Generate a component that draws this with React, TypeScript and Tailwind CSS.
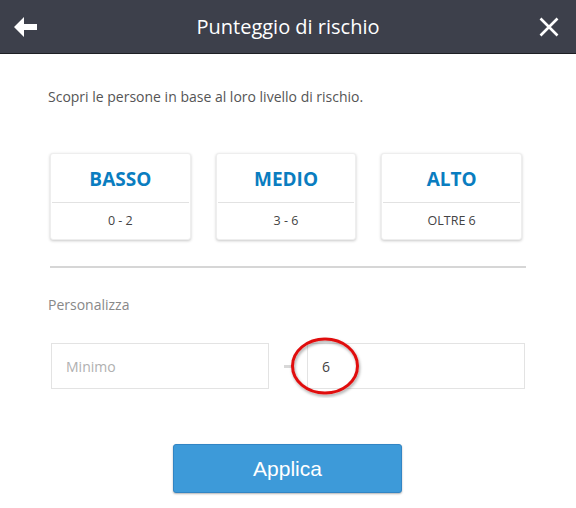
import React from "react";

const cards = [
  { title: "BASSO", range: "0 - 2" },
  { title: "MEDIO", range: "3 - 6" },
  { title: "ALTO", range: "OLTRE 6" },
];

export default function App() {
  return (
    <div className="w-[576px] h-[508px] bg-white overflow-hidden" style={{ fontFamily: '"Open Sans", sans-serif' }}>
      <div className="h-[54px] bg-[#3d404b] border-b border-[#1e1f24] flex items-center justify-between px-[14px]">
        <svg width="23" height="20" viewBox="0 0 23 20" className="mt-[1px]">
          <path d="M0 10 L10 0 L10 7 L23 7 L23 13 L10 13 L10 20 Z" fill="#fff" />
        </svg>
        <div className="text-white text-[20px] leading-none">Punteggio di rischio</div>
        <svg width="20" height="20" viewBox="0 0 20 20" className="mr-[3px]">
          <path d="M1.5 1.5 L18.5 18.5 M18.5 1.5 L1.5 18.5" stroke="#fff" strokeWidth="2.6" />
        </svg>
      </div>

      <div className="px-[48px]">
        <p className="mt-[33px] text-[14px] text-[#555] leading-[20px]">
          Scopri le persone in base al loro livello di rischio.
        </p>

        <div className="mt-[46px] ml-[2px] w-[472px] grid grid-cols-3 gap-[25px]">
          {cards.map((c) => (
            <div
              key={c.title}
              className="h-[87px] rounded-[3px] bg-white border border-[#eeeeee] shadow-[0_1px_3px_rgba(0,0,0,0.22)] flex flex-col"
            >
              <div className="h-[49px] flex items-center justify-center border-b border-[#e2e2e2] mx-[1px]">
                <span className="text-[19px] font-bold text-[#0a7dc0] leading-none mt-[2px]">{c.title}</span>
              </div>
              <div className="flex-1 flex items-center justify-center text-[12.5px] text-[#444]">
                {c.range}
              </div>
            </div>
          ))}
        </div>

        <div className="mt-[26px] ml-[2px] h-[2px] bg-[#d6d6d6] w-[476px]" />

        <div className="mt-[27px] text-[14px] text-[#888] leading-[20px]">Personalizza</div>

        <div className="mt-[28px] ml-[3px] flex items-center relative">
          <div className="w-[218px] h-[46px] border border-[#e3e3e3] flex items-center px-[14px] text-[14px] text-[#b0b0b0]">
            Minimo
          </div>
          <div className="w-[38px] flex justify-center">
            <div className="w-[9px] h-[3px] bg-[#d8d8d8]" />
          </div>
          <div className="w-[218px] h-[46px] border border-[#e3e3e3] flex items-center px-[14px] text-[14px] text-[#444]">
            6
          </div>
          <svg
            className="absolute left-[238px] top-[-7px]"
            width="74"
            height="62"
            viewBox="0 0 74 62"
          >
            <defs>
              <filter id="sh" x="-20%" y="-20%" width="140%" height="140%">
                <feDropShadow dx="1" dy="2" stdDeviation="1.5" floodColor="#000" floodOpacity="0.35" />
              </filter>
            </defs>
            <ellipse cx="36" cy="30" rx="32.5" ry="27" fill="none" stroke="#e01010" strokeWidth="3" filter="url(#sh)" />
          </svg>
        </div>

        <div className="mt-[55px] flex justify-center">
          <button
            className="w-[229px] h-[49px] ml-[-1px] rounded-[3px] bg-[#3d9ad9] border border-[#3285c4] shadow-[0_1px_2px_rgba(0,0,0,0.3)] text-white text-[21px]"
            style={{ fontFamily: '"Liberation Sans", Arial, sans-serif' }}
          >
            Applica
          </button>
        </div>
      </div>
    </div>
  );
}
